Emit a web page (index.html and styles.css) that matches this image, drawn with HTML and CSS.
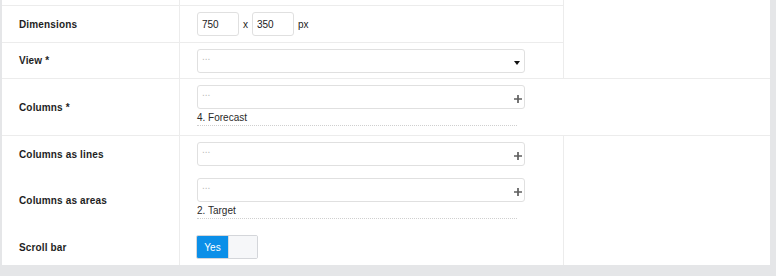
FILE: index.html
```html
<!DOCTYPE html>
<html>
<head>
<meta charset="utf-8">
<link rel="stylesheet" href="styles.css">
</head>
<body>
<div class="panel">
  <div class="block block-top">
    <div class="fields">
      <div class="row row-first"><div class="label"></div><div class="field"></div></div>
      <div class="row row-dim">
        <div class="label">Dimensions</div>
        <div class="field field-inline">
          <div class="box box-small">750</div>
          <span class="sep">x</span>
          <div class="box box-small">350</div>
          <span class="unit">px</span>
        </div>
      </div>
      <div class="row row-view">
        <div class="label">View *</div>
        <div class="field field-inline">
          <div class="box box-wide">
            <span class="ph">...</span>
            <svg class="caret" width="6" height="4" viewBox="0 0 6 4"><path d="M0 0H6L3 4Z" fill="#111"/></svg>
          </div>
        </div>
      </div>
    </div>
    <div class="aside"></div>
  </div>
  <div class="row row-columns">
    <div class="label">Columns *</div>
    <div class="field field-stack">
      <div class="box box-wide">
        <span class="ph">...</span>
        <svg class="plus" width="8" height="8" viewBox="0 0 8 8"><path d="M0 4H8M4 0V8" stroke="#5f5f5f" stroke-width="1.7"/></svg>
      </div>
      <div class="item">4. Forecast</div>
    </div>
  </div>
  <div class="block block-bottom">
    <div class="fields">
      <div class="row sub sub-1">
        <div class="label">Columns as lines</div>
        <div class="field field-stack">
          <div class="box box-wide">
            <span class="ph">...</span>
            <svg class="plus" width="8" height="8" viewBox="0 0 8 8"><path d="M0 4H8M4 0V8" stroke="#5f5f5f" stroke-width="1.7"/></svg>
          </div>
        </div>
      </div>
      <div class="row sub sub-2">
        <div class="label">Columns as areas</div>
        <div class="field field-stack">
          <div class="box box-wide">
            <span class="ph">...</span>
            <svg class="plus" width="8" height="8" viewBox="0 0 8 8"><path d="M0 4H8M4 0V8" stroke="#5f5f5f" stroke-width="1.7"/></svg>
          </div>
          <div class="item">2. Target</div>
        </div>
      </div>
      <div class="row sub sub-3">
        <div class="label">Scroll bar</div>
        <div class="field field-stack">
          <div class="toggle"><span class="on">Yes</span><span class="off"></span></div>
        </div>
      </div>
    </div>
    <div class="aside"></div>
  </div>
</div>
</body>
</html>
```
FILE: styles.css
```css
* { box-sizing: border-box; }
html, body { margin: 0; padding: 0; }
body {
  background: #e5e6e8;
  font-family: "Liberation Sans", Arial, sans-serif;
  font-size: 10px;
  color: #222;
  width: 776px;
  height: 276px;
  overflow: hidden;
}
.panel {
  margin-left: 2px;
  width: 768px;
  height: 265px;
  background: #fff;
}
.block { display: flex; }
.block-top { height: 79px; border-bottom: 1px solid #ececec; }
.block-bottom { height: 129px; }
.fields {
  width: 562px;
  border-right: 1px solid #ececec;
}
.aside { flex: 1; }
.row { display: flex; }
.label {
  width: 178px;
  flex: none;
  border-right: 1px solid #ececec;
  padding-left: 17px;
  font-weight: bold;
  letter-spacing: 0.15px;
  color: #1e1e1e;
  display: flex;
  align-items: center;
}
.field { flex: 1; padding-left: 17px; }
.field-inline { display: flex; align-items: center; }
.field-stack { padding-top: 6px; }
.row-first { height: 6px; border-bottom: 1px solid #ececec; }
.row-dim { height: 37px; border-bottom: 1px solid #ececec; }
.row-view { height: 35px; }
.row-view .field-inline { padding-top: 1px; }
.row-columns { height: 57px; border-bottom: 1px solid #ececec; }
.sub-1 { height: 36px; }
.sub-2 { height: 57px; }
.sub-3 { height: 36px; }
.box {
  height: 24px;
  border: 1px solid #e0e0e0;
  border-radius: 3px;
  background: #fff;
}
.box-small {
  width: 42px;
  padding: 0 4px;
  display: flex;
  align-items: center;
  color: #1a1a1a;
}
.sep { margin: 0 4px 0 4px; color: #222; }
.unit { margin-left: 4px; color: #222; }
.box-wide {
  width: 328px;
  display: flex;
  justify-content: space-between;
  align-items: flex-start;
  padding: 0 2px 0 4px;
}
.ph {
  color: #bbb;
  font-size: 10px;
  line-height: 12px;
  padding-top: 1px;
}
.caret { margin-top: 11px; margin-right: 2px; }
.plus { margin-top: 9px; }
.item {
  width: 320px;
  margin-top: 2px;
  line-height: 13px;
  padding-bottom: 1px;
  border-bottom: 1px dotted #cfcfcf;
  color: #2a2a2a;
}
.toggle {
  display: flex;
  width: 62px;
  height: 24px;
  border: 1px solid #d4d6da;
  border-radius: 2px;
  margin-left: -1px;
  overflow: hidden;
}
.on {
  width: 31px;
  background: #0b8fe8;
  color: #fff;
  display: flex;
  align-items: center;
  justify-content: center;
}
.off { flex: 1; background: #f6f7f9; border-left: 1px solid #d9dbde; }
```
